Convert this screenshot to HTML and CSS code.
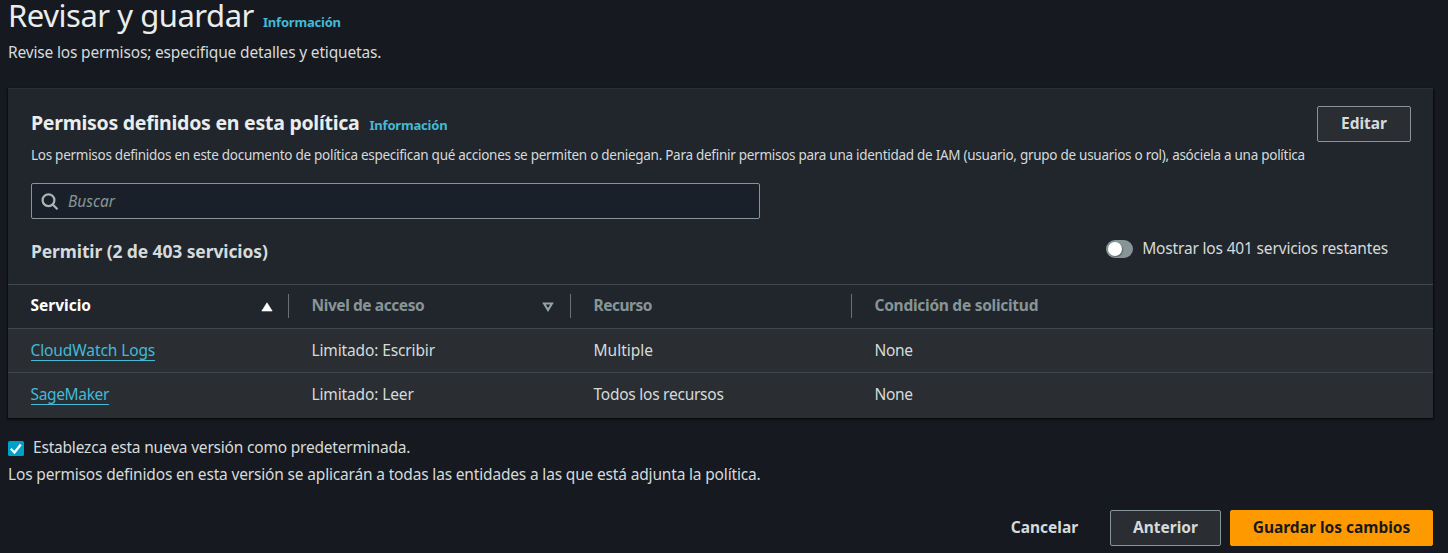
FILE: index.html
```html
<!DOCTYPE html>
<html lang="es">
<head>
<meta charset="utf-8">
<title>Revisar y guardar</title>
<link rel="stylesheet" href="styles.css">
</head>
<body>
<main class="page">
  <header class="page-header">
    <h1 class="page-title">Revisar y guardar</h1>
    <a class="info info-page">Información</a>
  </header>
  <p class="page-description"><span>Revise los permisos; especifique detalles y etiquetas.</span></p>

  <section class="panel">
    <div class="panel-header">
      <div class="panel-heading">
        <div class="title-row">
          <h2 class="panel-title">Permisos definidos en esta política</h2>
          <a class="info info-panel">Información</a>
        </div>
        <p class="panel-description"><span>Los permisos definidos en este documento de política especifican qué acciones se permiten o deniegan. Para definir permisos para una identidad de IAM (usuario, grupo de usuarios o rol), asóciela a una política</span></p>
      </div>
      <button class="button edit"><span>Editar</span></button>
    </div>
    <div class="search">
      <svg class="search-icon" width="18" height="18" viewBox="0 0 18 18"><circle cx="7.5" cy="7.2" r="5.9"/><path d="M11.7 11.4l4.8 4.9"/></svg>
      <span class="placeholder">Buscar</span>
    </div>
    <div class="allow-row">
      <h3 class="allow-title">Permitir (2 de 403 servicios)</h3>
      <div class="toggle-field"><span class="toggle"><span class="knob"></span></span><span class="toggle-label">Mostrar los 401 servicios restantes</span></div>
    </div>
    <div class="table">
      <div class="row head">
        <div class="cell sorted"><span class="t-servicio">Servicio</span><svg width="12" height="10" viewBox="0 0 12 10"><path class="sort-active" d="M6 .8L11.2 9H.8z"/></svg></div>
        <div class="cell"><span class="t-nivel">Nivel de acceso</span><svg class="idle-icon" width="12" height="10" viewBox="0 0 12 10"><path class="sort-idle" d="M2 1.6h8L6 8z"/></svg></div>
        <div class="cell"><span class="t-recurso">Recurso</span></div>
        <div class="cell"><span class="t-condicion">Condición de solicitud</span></div>
      </div>
      <div class="row">
        <div class="cell"><a class="link t-cloud">CloudWatch Logs</a></div>
        <div class="cell"><span class="t-limit">Limitado: Escribir</span></div>
        <div class="cell"><span>Multiple</span></div>
        <div class="cell"><span class="t-none">None</span></div>
      </div>
      <div class="row last">
        <div class="cell"><a class="link t-sage">SageMaker</a></div>
        <div class="cell"><span class="t-limit">Limitado: Leer</span></div>
        <div class="cell"><span class="t-todos">Todos los recursos</span></div>
        <div class="cell"><span class="t-none">None</span></div>
      </div>
    </div>
  </section>

  <div class="default-field">
    <svg class="checkbox" width="16" height="15" viewBox="0 0 16 15"><rect width="16" height="15" rx="1.5"/><path d="M2.8 7.8l3.7 3.7 6.3-8"/></svg>
    <span class="default-label">Establezca esta nueva versión como predeterminada.</span>
  </div>
  <p class="default-note"><span>Los permisos definidos en esta versión se aplicarán a todas las entidades a las que está adjunta la política.</span></p>

  <footer class="actions">
    <button class="button cancel"><span>Cancelar</span></button>
    <button class="button previous"><span>Anterior</span></button>
    <button class="button save"><span>Guardar los cambios</span></button>
  </footer>
</main>
</body>
</html>
```
FILE: styles.css
```css
* { box-sizing: border-box; }
body {
  margin: 0;
  background: #16191f;
  color: #d5dbdb;
  font: 15.5px/22px "Noto Sans", sans-serif;
  overflow: hidden;
}
h1, h2, h3, p { margin: 0; }
span, a, h1, h2, h3 { white-space: nowrap; }
.page { width: 1448px; height: 553px; padding: 0 15px 0 8px; }
.page-header { display: flex; align-items: baseline; gap: 9px; height: 41px; }
.page-title { font-size: 31px; line-height: 31px; font-weight: 400; color: #eaeded; letter-spacing: -0.47px; }
.info { color: #44b9d6; font-size: 13px; line-height: 18px; font-weight: 700; letter-spacing: -0.2px; }
.page-description { height: 47px; letter-spacing: -0.17px; }

.panel {
  height: 330px;
  background: #21252c;
  border-top: 1px solid #2b2f35;
  box-shadow: 0 1px 2px #08090b, 1px 1px 1px #0d0f13, -1px 1px 1px #101216;
}
.panel-header { display: flex; justify-content: space-between; height: 94px; padding: 17px 22px 0 23px; }
.panel-heading { width: 1276px; }
.title-row { display: flex; align-items: baseline; gap: 10px; height: 38px; padding-top: 3px; }
.panel-title { font-size: 19.5px; line-height: 28px; font-weight: 700; color: #eaeded; letter-spacing: -0.26px; }
.panel-description { font-size: 13.5px; line-height: 22px; letter-spacing: -0.275px; }
.button {
  display: flex;
  align-items: center;
  justify-content: center;
  height: 36px;
  padding: 0 0 2px;
  border: 1px solid #879596;
  border-radius: 2px;
  background: #2a2e33;
  color: #d5dbdb;
  font: 700 15.5px/22px "Noto Sans", sans-serif;
}
.edit { width: 94px; flex: none; }
.search {
  display: flex;
  align-items: center;
  gap: 9px;
  width: 729px;
  height: 36px;
  margin-left: 23px;
  padding: 0 0 1px 9px;
  border: 1px solid #879596;
  border-radius: 2px;
  background: #1a2029;
}
.search-icon { fill: none; stroke: #aab7b8; stroke-width: 2.2; margin-top: 2px; }
.placeholder { font-style: italic; color: #879596; }
.allow-row { display: flex; justify-content: space-between; height: 65px; padding: 18px 45px 0 23px; }
.allow-title { font-size: 17.5px; line-height: 28px; font-weight: 700; letter-spacing: -0.11px; }
.toggle-field { display: flex; gap: 9px; letter-spacing: -0.17px; }
.toggle { width: 27px; height: 18px; margin-top: 3px; padding: 2px; border-radius: 9px; background: #879596; }
.knob { display: block; width: 14px; height: 14px; border-radius: 50%; background: #fff; box-shadow: 1px 1px 1px #5b6667; }

.row {
  display: grid;
  grid-template-columns: 281px 282px 281px 1fr;
  height: 44px;
  border-top: 1px solid #414750;
  background: #2a2e33;
}
.row.last { height: 46px; }
.head { background: #21252c; color: #879596; font-weight: 700; }
.cell { display: flex; align-items: flex-start; justify-content: space-between; padding: 10px 15px 0 22.5px; }
.head .cell { height: 24px; margin-top: 9px; padding-top: 0; border-right: 1px solid #687078; }
.head .cell:last-child { border-right: 0; }
.head svg { margin-top: 8px; }
.head .idle-icon { margin-right: 1px; }
.sorted { color: #fff; }
.sort-active { fill: #fff; stroke: #fff; stroke-width: .6; }
.sort-idle { fill: none; stroke: #95a5a6; stroke-width: 2; }
.link { color: #44b9d6; height: 22px; border-bottom: 1px solid #44b9d6; }
.t-nivel { letter-spacing: -0.42px; }
.t-recurso { letter-spacing: -0.5px; }
.t-condicion { letter-spacing: -0.27px; }
.t-cloud { letter-spacing: -0.1px; }
.t-sage { letter-spacing: -0.35px; }
.t-limit { letter-spacing: -0.13px; }
.t-todos { letter-spacing: -0.25px; }
.t-none { letter-spacing: -0.3px; }

.default-field { display: flex; gap: 9px; height: 27px; margin-top: 18px; }
.checkbox { margin-top: 5px; }
.checkbox rect { fill: #00a1c9; }
.checkbox path { fill: none; stroke: #fff; stroke-width: 2.2; }
.default-label { letter-spacing: -0.2px; }
.default-note { height: 47px; letter-spacing: -0.17px; }
.actions { display: flex; justify-content: flex-end; }
.cancel { width: 113px; border-color: transparent; background: transparent; margin-right: 9px; }
.previous { width: 111px; margin-right: 9px; }
.save { width: 203px; background: #ff9900; border-color: #ff9900; color: #16191f; }
```
